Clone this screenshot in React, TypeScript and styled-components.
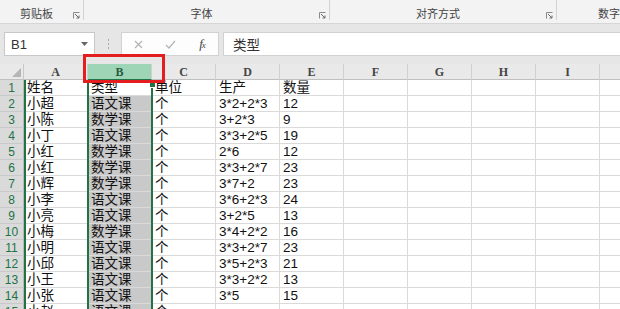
import React from "react";
import styled, { createGlobalStyle } from "styled-components";

const Global = createGlobalStyle`
  html, body { margin: 0; padding: 0; background: #fff; }
  body { font-family: "Noto Sans CJK SC", "Liberation Sans", sans-serif; }
  #root { width: 620px; height: 309px; }
`;

const GREEN = "#217346";

const Page = styled.div`
  position: relative;
  width: 620px;
  height: 309px;
  overflow: hidden;
  background: #fff;
`;

/* ---------- Ribbon ---------- */
const Ribbon = styled.div`
  display: flex;
  height: 23px;
  background: #f3f3f3;
  border-bottom: 1px solid #d6d6d6;
  overflow: hidden;
`;

const Group = styled.div<{ $w?: number }>`
  flex: ${(p) => (p.$w ? `0 0 ${p.$w}px` : "1 1 auto")};
  display: flex;
  align-items: flex-start;
  min-width: 0;
`;

const GroupLabel = styled.div<{ $indent?: number }>`
  flex: 1;
  text-align: ${(p) => (p.$indent ? "left" : "center")};
  padding-left: ${(p) => p.$indent || 0}px;
  padding-top: 5px;
  line-height: 16px;
  font-size: 11px;
  color: #444;
  white-space: nowrap;
  font-family: "Noto Sans CJK SC", sans-serif;
`;

const Launcher = styled.svg`
  flex: 0 0 7px;
  width: 7px;
  height: 7px;
  margin: 12px 3px 0 0;
`;

const GroupSep = styled.div`
  flex: 0 0 1px;
  height: 20px;
  background: #d2d2d2;
`;

const LaunchIcon = () => (
  <Launcher viewBox="0 0 7 7">
    <path d="M0.5 6.5V0.5H6.5" fill="none" stroke="#8a8a8a" strokeWidth="1" />
    <path d="M2 2L6 6M6 3.5V6H3.5" fill="none" stroke="#6a6a6a" strokeWidth="1" />
  </Launcher>
);

/* ---------- Formula bar ---------- */
const FormulaBar = styled.div`
  display: flex;
  height: 24px;
  padding: 8px 0 8px 4px;
  background: #e6e6e6;
`;

const NameBox = styled.div`
  flex: 0 0 91px;
  box-sizing: border-box;
  border: 1px solid #c8c8c8;
  background: #fff;
  display: flex;
  align-items: center;
  justify-content: space-between;
  padding: 0 6px 0 6px;
  font: 13px "Liberation Sans", sans-serif;
  color: #333;
`;

const Caret = styled.svg`
  width: 7px;
  height: 4px;
`;

const Grip = styled.div`
  flex: 0 0 26px;
  display: flex;
  flex-direction: column;
  align-items: center;
  justify-content: center;
  gap: 2px;
`;

const GripDot = styled.span`
  width: 1px;
  height: 2px;
  background: #a8a8a8;
`;

const ButtonsBox = styled.div`
  flex: 0 0 97px;
  box-sizing: border-box;
  border: 1px solid #d2d2d2;
  background: #fdfdfd;
  display: flex;
`;

const BarButton = styled.div`
  flex: 0 0 32px;
  display: flex;
  align-items: center;
  justify-content: center;
`;

const Fx = styled.span`
  font-family: "Liberation Serif", serif;
  font-style: italic;
  font-size: 13px;
  color: #444;
  letter-spacing: -1px;
  & > small {
    font-size: 9px;
  }
`;

const FormulaInput = styled.div`
  flex: 1;
  margin-left: 4px;
  box-sizing: border-box;
  border: 1px solid #d2d2d2;
  border-right: none;
  background: #fff;
  display: flex;
  align-items: center;
  padding-left: 9px;
  font-size: 13.5px;
  color: #333;
  font-family: "Noto Sans CJK SC", sans-serif;
`;

/* ---------- Sheet ---------- */
const Sheet = styled.div`
  position: relative;
  display: grid;
  grid-template-columns: 24px repeat(10, 64px);
  grid-auto-rows: 16px;
`;

const Corner = styled.div`
  position: relative;
  background: #e9e9e9;
  border-right: 1px solid #c8c8c8;
  border-bottom: 1px solid #c0c0c0;
  box-sizing: border-box;
`;

const CornerTri = styled.svg`
  position: absolute;
  right: 2px;
  bottom: 2px;
  width: 9px;
  height: 9px;
`;

const ColHead = styled.div<{ $sel?: boolean }>`
  box-sizing: border-box;
  background: ${(p) => (p.$sel ? "#9fd5b7" : "#e9e9e9")};
  border-right: 1px solid #d0d0d0;
  border-bottom: 1px solid ${(p) => (p.$sel ? GREEN : "#c0c0c0")};
  display: flex;
  align-items: center;
  justify-content: center;
  font: 600 12px "Liberation Serif", serif;
  color: ${(p) => (p.$sel ? "#2a5a3e" : "#444")};
  padding-top: 1px;
`;

const RowHead = styled.div`
  box-sizing: border-box;
  background: #dadada;
  border-right: 1px solid #b9b9b9;
  border-bottom: 1px solid #c9c9c9;
  display: flex;
  align-items: center;
  justify-content: center;
  font: 12px "Liberation Sans", sans-serif;
  color: ${GREEN};
`;

const Cell = styled.div<{ $sel?: boolean }>`
  box-sizing: border-box;
  background: ${(p) => (p.$sel ? "#c9c9c9" : "#fff")};
  border-right: 1px solid #dadada;
  border-bottom: 1px solid #dadada;
  padding-left: 3px;
  font-size: 13.5px;
  line-height: 15px;
  font-family: "Liberation Sans", "Noto Sans CJK SC", sans-serif;
  color: #111;
  white-space: nowrap;
  overflow: hidden;
`;

const SelLine = styled.div<{ $x: number; $top: number }>`
  position: absolute;
  left: ${(p) => p.$x}px;
  top: ${(p) => p.$top}px;
  bottom: 0;
  width: 2px;
  background: ${GREEN};
`;

const FillHandle = styled.div`
  position: absolute;
  left: 150px;
  top: 18px;
  width: 5px;
  height: 5px;
  background: ${GREEN};
  box-shadow: 0 0 0 1px #fff;
`;

const Annotation = styled.div`
  position: absolute;
  left: 83px;
  top: 54px;
  width: 82px;
  height: 29px;
  box-sizing: border-box;
  border: 3px solid #e41e1e;
  pointer-events: none;
`;

const COLS = ["A", "B", "C", "D", "E", "F", "G", "H", "I", "J"];

const DATA: string[][] = [
  ["姓名", "类型", "单位", "生产", "数量"],
  ["小超", "语文课", "个", "3*2+2*3", "12"],
  ["小陈", "数学课", "个", "3+2*3", "9"],
  ["小丁", "语文课", "个", "3*3+2*5", "19"],
  ["小红", "数学课", "个", "2*6", "12"],
  ["小红", "数学课", "个", "3*3+2*7", "23"],
  ["小辉", "数学课", "个", "3*7+2", "23"],
  ["小李", "语文课", "个", "3*6+2*3", "24"],
  ["小亮", "语文课", "个", "3+2*5", "13"],
  ["小梅", "数学课", "个", "3*4+2*2", "16"],
  ["小明", "语文课", "个", "3*3+2*7", "23"],
  ["小邱", "语文课", "个", "3*5+2*3", "21"],
  ["小王", "语文课", "个", "3*3+2*2", "13"],
  ["小张", "语文课", "个", "3*5", "15"],
  ["小赵", "语文课", "个", "", ""],
];

export default function App() {
  return (
    <Page>
      <Global />
      <Ribbon>
        <Group $w={84}>
          <GroupLabel>剪贴板</GroupLabel>
          <LaunchIcon />
          <GroupSep />
        </Group>
        <Group $w={246}>
          <GroupLabel>字体</GroupLabel>
          <LaunchIcon />
          <GroupSep />
        </Group>
        <Group $w={227}>
          <GroupLabel>对齐方式</GroupLabel>
          <LaunchIcon />
          <GroupSep />
        </Group>
        <Group>
          <GroupLabel $indent={41}>数字</GroupLabel>
        </Group>
      </Ribbon>

      <FormulaBar>
        <NameBox>
          <span>B1</span>
          <Caret viewBox="0 0 7 4">
            <path d="M0 0H7L3.5 4Z" fill="#666" />
          </Caret>
        </NameBox>
        <Grip>
          <GripDot />
          <GripDot />
          <GripDot />
        </Grip>
        <ButtonsBox>
          <BarButton>
            <svg width="9" height="9" viewBox="0 0 9 9">
              <path d="M1 1L8 8M8 1L1 8" stroke="#b4b4b4" strokeWidth="1.2" fill="none" />
            </svg>
          </BarButton>
          <BarButton>
            <svg width="11" height="9" viewBox="0 0 11 9">
              <path d="M1 5L4 8L10 1" stroke="#b4b4b4" strokeWidth="1.2" fill="none" />
            </svg>
          </BarButton>
          <BarButton>
            <Fx>
              f<small>x</small>
            </Fx>
          </BarButton>
        </ButtonsBox>
        <FormulaInput>类型</FormulaInput>
      </FormulaBar>

      <Sheet>
        <Corner>
          <CornerTri viewBox="0 0 9 9">
            <path d="M9 0V9H0Z" fill="#b6b6b6" />
          </CornerTri>
        </Corner>
        {COLS.map((c) => (
          <ColHead key={c} $sel={c === "B"}>
            {c}
          </ColHead>
        ))}
        {DATA.map((row, r) => (
          <React.Fragment key={r}>
            <RowHead>{r + 1}</RowHead>
            {COLS.map((c, ci) => (
              <Cell key={c} $sel={ci === 1 && r > 0}>
                {row[ci] || ""}
              </Cell>
            ))}
          </React.Fragment>
        ))}
        <SelLine $x={24} $top={16} />
        <SelLine $x={87} $top={16} />
        <SelLine $x={151} $top={23} />
        <FillHandle />
      </Sheet>

      <Annotation />
    </Page>
  );
}
